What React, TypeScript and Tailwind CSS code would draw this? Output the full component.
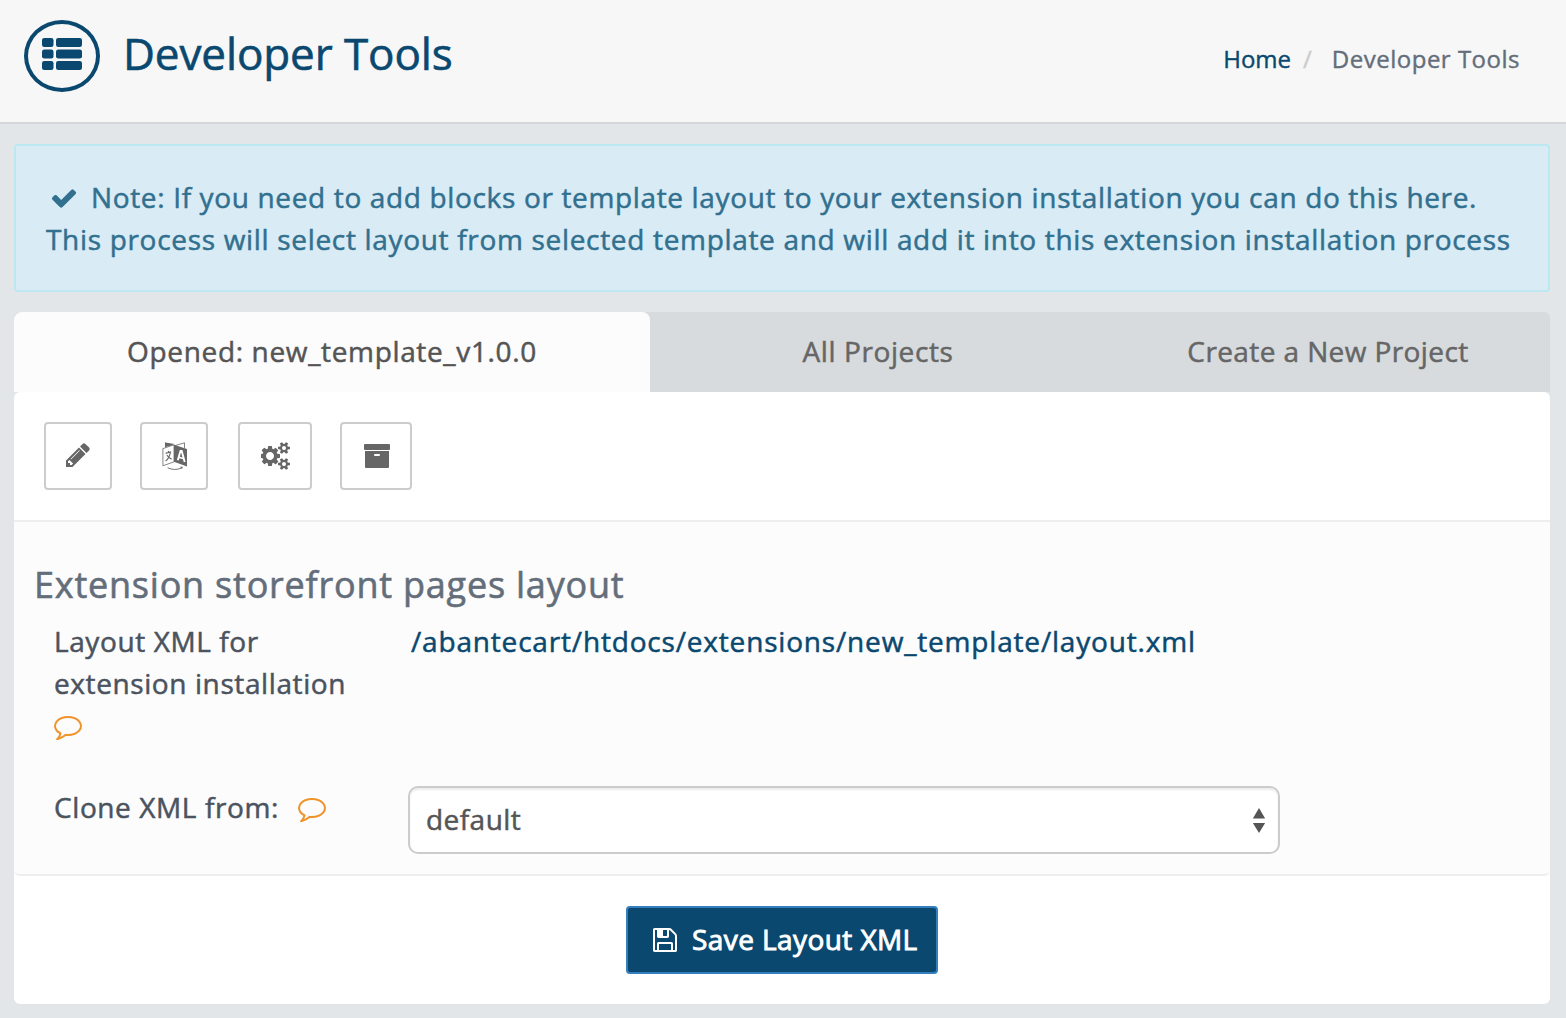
import type { ReactNode } from "react";

function Glyph({ d, className }: { d: string; className: string }) {
  return (
    <svg viewBox="0 0 1792 1792" fill="currentColor" className={className} aria-hidden="true">
      <path d={d} />
    </svg>
  );
}

const CHECK =
  "M1671 566q0 40-28 68l-724 724-136 136q-28 28-68 28t-68-28l-136-136-362-362q-28-28-28-68t28-68l136-136q28-28 68-28t68 28l294 295 656-657q28-28 68-28t68 28l136 136q28 28 28 68z";
const PENCIL =
  "M491 1536l91-91-235-235-91 91v107h128v128h107zm523-928q0-22-22-22-10 0-17 7l-542 542q-7 7-7 17 0 22 22 22 10 0 17-7l542-542q7-7 7-17zm-54-192l416 416-832 832h-416v-416zm683 96q0 53-37 90l-166 166-416-416 166-165q36-38 90-38 53 0 91 38l235 234q37 39 37 91z";
const FLOPPY =
  "M512 1536h768v-384h-768v384zm896 0h128v-896q0-14-10-38.5t-20-34.5l-281-281q-10-10-34-20t-39-10v416q0 40-28 68t-68 28h-576q-40 0-68-28t-28-68v-416h-128v1280h128v-416q0-40 28-68t68-28h832q40 0 68 28t28 68v416zm-384-928v-320q0-13-9.5-22.5t-22.5-9.5h-192q-13 0-22.5 9.5t-9.5 22.5v320q0 13 9.5 22.5t22.5 9.5h192q13 0 22.5-9.5t9.5-22.5zm640 32v928q0 40-28 68t-68 28h-1344q-40 0-68-28t-28-68v-1344q0-40 28-68t68-28h928q40 0 88 20t76 48l280 280q28 28 48 76t20 88z";
const COMMENT =
  "M896 384q-204 0-381.5 69.5t-282 187.5-104.5 255q0 112 71.5 213.5t201.5 175.5l87 50-27 96q-24 91-70 172 152-63 275-171l43-38 57 6q69 8 130 8 204 0 381.5-69.5t282-187.5 104.5-255-104.5-255-282-187.5-381.5-69.5zm896 512q0 174-120 321.5t-326 233-450 85.5q-70 0-145-8-198 175-460 242-49 14-114 22h-5q-15 0-27-10.5t-16-27.5v-1q-3-4-.5-12t2-10 4.5-9.5l6-9 7-8.5 8-9q7-8 31-34.5t34.5-38 31-39.5 32.5-51 27-59 26-76q-157-89-247.5-220t-90.5-281q0-174 120-321.5t326-233 450-85.5 450 85.5 326 233 120 321.5z";
const COG_LARGE =
  "M832 896q0-106-75-181t-181-75-181 75-75 181 75 181 181 75 181-75 75-181zm384-91v185q0 10-7 19.5t-16 10.5l-155 24q-11 35-32 76 34 48 90 115 7 11 7 20 0 12-7 19-23 30-82.5 89.5t-78.5 59.5q-11 0-21-7l-115-90q-37 19-77 31-11 108-23 155-7 24-30 24h-186q-11 0-20-7.5t-10-17.5l-23-153q-34-10-75-31l-118 89q-7 7-20 7-11 0-21-8-144-133-144-160 0-9 7-19 10-14 41-53t47-61q-23-44-35-82l-152-24q-10-1-17-9.5t-7-19.5v-185q0-10 7-19.5t16-10.5l155-24q11-35 32-76-34-48-90-115-7-11-7-20 0-12 7-20 22-30 82-89t79-59q11 0 21 7l115 90q34-18 77-32 11-108 23-154 7-24 30-24h186q11 0 20 7.5t10 17.5l23 153q34 10 75 31l118-89q8-7 20-7 11 0 21 8 144 133 144 160 0 8-7 19-12 16-42 54t-45 60q23 48 34 82l152 23q10 2 17 10.5t7 19.5z";
const COG_SMALL =
  "M1600 1408q0-52-38-90t-90-38-90 38-38 90q0 53 37.5 90.5t90.5 37.5 90.5-37.5 37.5-90.5zM1856 1338v140q0 16-149 31-12 27-30 52 51 113 51 138 0 4-4 7-122 71-124 71-8 0-46-47t-52-68q-20 2-30 2t-30-2q-14 21-52 68t-46 47q-2 0-124-71-4-3-4-7 0-25 51-138-18-25-30-52-149-15-149-31v-140q0-16 149-31 13-29 30-52-51-113-51-138 0-4 4-7 4-2 35-20t59-34 30-16q8 0 46 46.5t52 67.5q20-2 30-2t30 2q51-71 92-112l6-2q4 0 124 70 4 3 4 7 0 25-51 138 17 23 30 52 149 15 149 31z";

function CogsIcon() {
  return (
    <svg viewBox="0 0 1920 1792" fill="currentColor" className="ml-px h-[28px] w-[30px]" aria-hidden="true">
      <path d={COG_LARGE} />
      <path d={COG_SMALL} />
      <path d={COG_SMALL} transform="translate(0 -1024)" />
    </svg>
  );
}

function LanguageIcon() {
  return (
    <svg viewBox="0 0 26 28" fill="none" stroke="currentColor" className="ml-[2px] h-[28px] w-[26px]" aria-hidden="true">
      <path d="M3 .5v4.800l9.500-3.200z" fill="currentColor" stroke="none" />
      <path d="M3 .5v4l8.500-1.500z" fill="currentColor" stroke="none" />
      <path d="M13 3.600 22.500.8v5.400" strokeWidth=".8" />
      <path d="M.9 6.600 12 2.800v17L.9 23.800z" strokeWidth=".8" />
      <path d="M12 2.800 25 7v17.400l-13-4.600z" fill="currentColor" stroke="none" />
      <path d="M15.800 18.200l2.700-9.200h1.200l3 11" stroke="#fff" strokeWidth="1.900" />
      <path d="M16.600 15.200l4.800 1.400" stroke="#fff" strokeWidth="1.600" />
      <path d="M3.600 11.400l5.600-1.600M6.200 9l.5 1.600M8.400 10.400Q7.400 16 3.600 19.200M4.800 13.200Q6.800 15.800 9.600 17.200" strokeWidth="1.100" />
      <path d="M5.600 25.800q7 3.200 14 .2" strokeWidth=".9" />
      <path d="M18 24.800h2.800l-.8 2.400z" fill="currentColor" stroke="none" />
    </svg>
  );
}

function ArchiveIcon() {
  return (
    <svg viewBox="0 0 26 24" fill="currentColor" className="ml-px h-[24px] w-[26px]" aria-hidden="true">
      <rect width="26" height="6" rx="1" />
      <path fillRule="evenodd" d="M1 7h24v16q0 1-1 1H2q-1 0-1-1zM11 10q-1 0-1 1t1 1h4q1 0 1-1t-1-1z" />
    </svg>
  );
}

function ToolButton({ width, children }: { width: string; children: ReactNode }) {
  return (
    <button
      type="button"
      className={`flex h-[68px] items-center justify-center rounded-[4px] border-2 border-[#ccc] bg-white text-[#666] ${width}`}
    >
      {children}
    </button>
  );
}

function Header() {
  return (
    <header className="flex h-[124px] justify-between border-b-2 border-[#d3d7db] bg-[#f7f7f7] pl-6 pr-[46px]">
      <div className="flex text-[#0a486f]">
        <div className="mt-5 flex h-[72px] w-[76px] justify-center rounded-[50%] border-4 border-[#0a486f] pt-[14px]">
          <svg viewBox="0 0 40 32" fill="currentColor" className="h-8 w-10" aria-hidden="true">
            {[0, 11.5, 23].map((y) => (
              <g key={y}>
                <rect x="0" y={y} width="11.5" height="9" rx="2.2" />
                <rect x="14" y={y} width="26" height="9" rx="2.2" />
              </g>
            ))}
          </svg>
        </div>
        <h1 className="ml-[23px] mt-[23px] text-[44px] leading-[60px] tracking-[-0.1px] [-webkit-text-stroke:0.6px]">
          Developer Tools
        </h1>
      </div>
      <nav className="mt-[38px] flex text-[24px] leading-[42px] text-[#646e7b] [-webkit-text-stroke:0.4px]">
        <a className="text-[#0a486f]">Home</a>
        <span className="ml-3 text-[#ccc]">/</span>
        <span className="ml-[20px] tracking-[0.5px]">Developer Tools</span>
      </nav>
    </header>
  );
}

export default function App() {
  return (
    <div className="min-h-[1018px] bg-[#e2e6e9] font-['Open_Sans',sans-serif] text-[28px] leading-[42px]">
      <Header />
      <main className="pl-[14px] pr-4 pt-5">
        <div className="h-[148px] whitespace-nowrap rounded-[4px] border-2 border-[#bce8f1] bg-[#d9ebf5] pl-[30px] pt-[30px] text-[#31708f] [-webkit-text-stroke:0.5px]">
          <div className="flex">
            <Glyph d={CHECK} className="ml-1 mt-[8px] h-[28px] w-[28px] [-webkit-text-stroke:0]" />
            <p className="ml-[13px] tracking-[0.65px]">
              Note: If you need to add blocks or template layout to your extension installation you can do this here.
            </p>
          </div>
          <p className="tracking-[0.68px]">
            This process will select layout from selected template and will add it into this extension installation process
          </p>
        </div>

        <div className="mt-5 flex h-20 rounded-t-[6px] bg-[#d7dbde] text-center leading-[78px] text-[#666] [-webkit-text-stroke:0.5px]">
          <div className="w-[636px] rounded-t-[8px] bg-[#fcfcfc] tracking-[0.65px] text-[#555]">
            Opened: new_template_v1.0.0
          </div>
          <div className="w-[456px] tracking-[0.6px]">All Projects</div>
          <div className="w-[444px] tracking-[0.4px]">Create a New Project</div>
        </div>

        <section className="rounded-[6px] bg-white">
          <div className="flex h-[130px] border-b-2 border-[#eee] pl-[30px] pt-[30px]">
            <ToolButton width="w-[68px]">
              <Glyph d={PENCIL} className="-mt-[2px] h-[28px] w-[28px]" />
            </ToolButton>
            <div className="w-7" />
            <ToolButton width="w-[68px]">
              <LanguageIcon />
            </ToolButton>
            <div className="w-[30px]" />
            <ToolButton width="w-[74px]">
              <CogsIcon />
            </ToolButton>
            <div className="w-7" />
            <ToolButton width="w-[72px]">
              <ArchiveIcon />
            </ToolButton>
          </div>

          <div className="h-[354px] rounded-b-[6px] border-b-2 border-[#eee] bg-[#fcfcfc] pt-[41px] text-[#4a535e] [-webkit-text-stroke:0.5px]">
            <h2 className="ml-[20px] text-[36px] leading-[44px] tracking-[0.78px] text-[#646e7b] [-webkit-text-stroke:0.6px]">
              Extension storefront pages layout
            </h2>
            <div className="mt-[13px] flex h-[166px]">
              <div className="ml-10 w-[356px] tracking-[0.6px]">
                Layout XML for
                <br />
                extension installation
                <Glyph d={COMMENT} className="mt-[8px] h-[28px] w-[28px] text-[#f0932b]" />
              </div>
              <a className="ml-[1px] tracking-[0.82px] text-[#0a486f]">/abantecart/htdocs/extensions/new_template/layout.xml</a>
            </div>
            <div className="flex">
              <div className="ml-10 flex w-[354px] tracking-[0.6px]">
                Clone XML from:
                <Glyph d={COMMENT} className="ml-[19px] mt-[8px] h-[28px] w-[28px] text-[#f0932b]" />
              </div>
              <div className="flex h-[68px] w-[872px] items-center justify-between rounded-[10px] border-2 border-[#ccc] bg-white pl-4 pr-3 text-[#555] shadow-[inset_0_2px_2px_rgba(0,0,0,0.075)]">
                <span className="-mt-[2px] tracking-[0.45px]">default</span>
                <svg viewBox="0 0 12 25" fill="#555" className="mr-px h-[25px] w-3" aria-hidden="true">
                  <path d="M6 0l6.200 10.500H-.2zM-.2 15h12.400L6 25z" />
                </svg>
              </div>
            </div>
          </div>

          <div className="flex h-32 justify-center pt-[30px]">
            <button
              type="button"
              className="flex h-[68px] w-[312px] items-center rounded-[4px] border-2 border-[#357ebd] bg-[#0a486f] pl-[23px] text-white [-webkit-text-stroke:0.9px]"
            >
              <Glyph d={FLOPPY} className="h-[28px] w-[28px]" />
              <span className="-mt-[2px] ml-[13px] tracking-[0.42px]">Save Layout XML</span>
            </button>
          </div>
        </section>
      </main>
    </div>
  );
}
